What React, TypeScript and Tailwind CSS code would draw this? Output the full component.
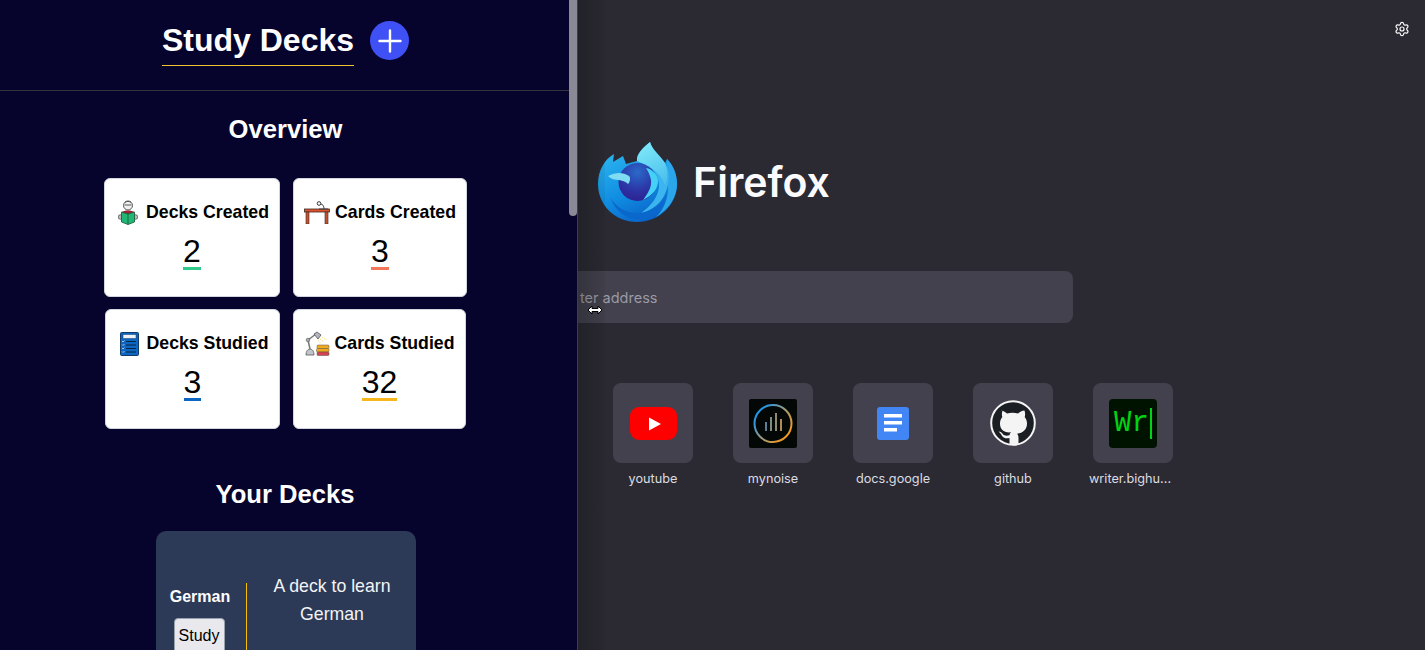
import React from 'react';
import { Settings } from 'lucide-react';

const ReaderIcon = () => (
  <svg width="20" height="25" viewBox="0 0 20 25" className="shrink-0">
    <circle cx="10" cy="5.500" r="4.500" fill="#f1f1f1" stroke="#555" strokeWidth="1" />
    <path d="M6.500 5h7M7 2.500c2-1.500 4-1.500 6 0" fill="none" stroke="#555" strokeWidth="1" />
    <path d="M4 12c2-2 10-2 12 0v3H4z" fill="#a32035" />
    <circle cx="2.500" cy="17" r="2.300" fill="#bbb" stroke="#555" strokeWidth="0.800" />
    <circle cx="17.500" cy="17" r="2.300" fill="#bbb" stroke="#555" strokeWidth="0.800" />
    <path d="M3.500 12 10 14l6.500-2v10L10 24.500 3.500 22z" fill="#22b573" stroke="#14583a" strokeWidth="0.800" />
    <path d="M10 14v10.500" stroke="#14583a" strokeWidth="0.800" />
  </svg>
);

const TableIcon = () => (
  <svg width="26" height="23" viewBox="0 0 26 23" className="shrink-0">
    <rect x="0.500" y="8" width="25" height="3" fill="#e0532a" stroke="#3a2a28" strokeWidth="0.800" />
    <rect x="2" y="11" width="3" height="12" fill="#c9502c" stroke="#3a2a28" strokeWidth="0.600" />
    <rect x="21" y="11" width="3" height="12" fill="#c9502c" stroke="#3a2a28" strokeWidth="0.600" />
    <path d="M15 8h9M20 8c0-3-1-5-4-5" fill="none" stroke="#444" strokeWidth="1" />
    <circle cx="15" cy="2.500" r="1.800" fill="#fff" stroke="#333" strokeWidth="1" />
  </svg>
);

const ChecklistIcon = () => (
  <svg width="19" height="24" viewBox="0 0 19 24" className="shrink-0">
    <rect x="0.500" y="0.500" width="18" height="23" rx="1" fill="#0d66c2" stroke="#123a66" />
    <rect x="3" y="2.500" width="13" height="4" fill="#eef2f6" stroke="#123a66" strokeWidth="0.500" />
    <path d="M6 9.500h10M6 13h10M6 16.500h10M6 20h10" stroke="#0a2540" strokeWidth="1" />
    <path d="M2 9l1 1 1.500-1.500M2 12.500l1 1 1.500-1.500M2 16l1 1 1.500-1.500M2 19.500l1 1 1.500-1.500" fill="none" stroke="#dbe8f5" strokeWidth="0.700" />
  </svg>
);

const LampIcon = () => (
  <svg width="25" height="25" viewBox="0 0 25 25" className="shrink-0">
    <path d="M1 24c0-4 2-6 4-6s4 2 4 6z" fill="#c2c4cc" stroke="#555" strokeWidth="0.800" />
    <path d="M5 18 3 9l8-6" fill="none" stroke="#777" strokeWidth="1.500" />
    <circle cx="3" cy="9" r="1.800" fill="#aaa" stroke="#555" strokeWidth="0.600" />
    <path d="m9 3 3-2 4 3-3 4z" fill="#b5b7bf" stroke="#555" strokeWidth="0.800" />
    <path d="m15 8 4 3M13 9l3 4M17 6l5 3" stroke="#f8dc7a" strokeWidth="1" strokeDasharray="1.500 1" />
    <rect x="12" y="14" width="12" height="3.500" rx="1" fill="#f2a91c" stroke="#555" strokeWidth="0.500" />
    <rect x="11.500" y="17.500" width="12.500" height="3.500" rx="1" fill="#f2a91c" stroke="#555" strokeWidth="0.500" />
    <rect x="12" y="21" width="12" height="3.500" rx="1" fill="#d4434c" stroke="#555" strokeWidth="0.500" />
  </svg>
);

const FirefoxLogo = () => (
  <svg width="80" height="81" viewBox="0 0 80 81" className="shrink-0">
    <defs>
      <linearGradient id="fxBase" x1="0.150" y1="0.100" x2="0.600" y2="1">
        <stop offset="0" stopColor="#2cb6f0" />
        <stop offset="0.600" stopColor="#0f8be0" />
        <stop offset="1" stopColor="#0a62c8" />
      </linearGradient>
      <linearGradient id="fxFlame" x1="0.300" y1="0" x2="0.700" y2="1">
        <stop offset="0" stopColor="#7fe8f8" />
        <stop offset="1" stopColor="#4cc0ee" />
      </linearGradient>
      <radialGradient id="fxGlobe" cx="0.500" cy="0.250" r="0.800">
        <stop offset="0" stopColor="#2a6ac8" />
        <stop offset="0.600" stopColor="#2c34a6" />
        <stop offset="1" stopColor="#2d1f8f" />
      </radialGradient>
    </defs>
    <path d="M39 81C17 81 0 64 0 43 0 29 7 18 16 13l-1 8 10-6 3 8 11-3C38 13 46 6 52 1c2 8 10 13 15 21l2-4c6 6 10 15 10 25 0 21-18 38-40 38z" fill="url(#fxBase)" />
    <path d="M69 18c6 6 10 15 10 25 0 14-9 26-21 33 8-8 12-18 12-30 0-10-2-19-1-28z" fill="#2ba6ea" />
    <path d="M67 22c5 9 5 20 0 31-4 9-12 16-24 19 10-7 17-16 18-26 1-9-5-20-22-30z" fill="#3cb4ee" />
    <path d="M39 20C38 13 46 6 52 1c2 8 10 13 15 21 3 7 3 15 0 22-3-9-10-17-28-24z" fill="url(#fxFlame)" />
    <path d="M12 56c7 12 17 16 28 16 10 0 20-5 27-14-5 13-16 20-28 20-12 0-22-9-27-22z" fill="#0a68cc" />
    <ellipse cx="39.500" cy="41" rx="19" ry="19" fill="url(#fxGlobe)" />
    <path d="M10 35c8-4 15-4 21 0 2 2 1 6-1 8-3-3-5-3-9-4-4 0-8-1-11-4z" fill="#7fdcf2" />
    <path d="M48 27c6 1 12 7 12 13 0 8-6 15-15 19 5-7 9-13 8-20-1-5-3-9-5-12z" fill="#45d0f5" />
  </svg>
);

const YoutubeIcon = () => (
  <svg width="47" height="33" viewBox="0 0 47 33">
    <rect width="47" height="33" rx="9" fill="#ff0000" />
    <path d="M19 10.500 31 17 19 23.500z" fill="#fff" />
  </svg>
);

const MynoiseIcon = () => (
  <svg width="48" height="49" viewBox="0 0 48 49">
    <defs>
      <linearGradient id="ringGrad" x1="0" y1="0.100" x2="1" y2="0.900">
        <stop offset="0.100" stopColor="#1c96ee" />
        <stop offset="0.500" stopColor="#9a9a80" />
        <stop offset="0.900" stopColor="#f59a1c" />
      </linearGradient>
    </defs>
    <rect width="48" height="49" rx="2" fill="#030806" />
    <circle cx="24" cy="24.500" r="18.500" fill="none" stroke="url(#ringGrad)" strokeWidth="2" />
    <rect x="16" y="23" width="2" height="9" fill="#5c7f95" />
    <rect x="21" y="18" width="2" height="14" fill="#7f8a80" />
    <rect x="26" y="14" width="2" height="18" fill="#8f8a70" />
    <rect x="31" y="20" width="2" height="12" fill="#b08a50" />
  </svg>
);

const DocsIcon = () => (
  <svg width="32" height="33" viewBox="0 0 32 33">
    <rect width="32" height="33" rx="3" fill="#4285f4" />
    <rect x="7" y="7" width="18" height="3.500" fill="#fff" />
    <rect x="7" y="14" width="18" height="3.500" fill="#fff" />
    <rect x="7" y="21" width="13" height="3.500" fill="#fff" />
  </svg>
);

const GithubIcon = () => (
  <svg width="46" height="46" viewBox="0 0 46 46">
    <circle cx="23" cy="23" r="21.800" fill="#1b1f23" stroke="#f4f4f4" strokeWidth="2" />
    <path d="M11 10.500c2.500 0 5 1.500 6.500 3 3.500-1 7.500-1 11 0 1.500-1.500 4-3 6.500-3 .8 2.500.8 5 .2 6.500 1.500 1.800 2.300 4 2.300 6.500 0 6-4 9.500-10 10.300 1 1 1.500 2.500 1.500 4.200V44.800c-2.600.6-6.400.6-9 0V38c-3 .8-6.500.5-8-3-.7-1.500-2-2.800-3-3.500 2 0 3.500 1.200 4.500 2.800 1.200 1.600 3.700 1.800 6.500 1 .1-1.200.6-2.200 1.500-3C14.500 33 10.500 29.500 10.500 23.500c0-2.500.8-4.700 2.300-6.500-.6-1.500-.6-4 .2-6.500z" fill="#f4f4f4" transform="translate(-.500 0)" />
  </svg>
);

const ResizeCursor = () => (
  <svg width="16" height="10" viewBox="0 0 16 10">
    <path d="M1 5 5 1v2.500h6V1l4 4-4 4V6.500H5V9z" fill="#fff" stroke="#000" strokeWidth="1" />
  </svg>
);

const StatCard = ({ icon, title, value, barColor, width, height, gap }: { icon: React.ReactNode; title: string; value: number; barColor: string; width: string; height: string; gap: string }) => (
  <div className={`flex flex-col items-center rounded-md border border-gray-300 bg-white text-black ${width} ${height}`}>
    <div className={`flex h-[25px] items-center mt-[21px] ${gap}`}>
      {icon}
      <span className="text-[17.7px] font-bold leading-none whitespace-nowrap">{title}</span>
    </div>
    <div className={`mt-[11px] border-b-[3px] text-[32px] leading-[31px] ${barColor}`}>{value}</div>
  </div>
);

const Tile = ({ label, labelClass, children }: { label: string; labelClass?: string; children: React.ReactNode }) => (
  <div className="flex w-[120px] flex-col items-center">
    <div className="flex size-[80px] items-center justify-center rounded-lg bg-[#42414d]">{children}</div>
    <span className={`mt-[8px] text-center text-[12.7px] leading-[16px] whitespace-nowrap text-[#dcdce0] ${labelClass ?? ''}`}>{label}</span>
  </div>
);

export default function App() {
  return (
    <div className="relative h-[650px] w-full overflow-hidden bg-[#2b2a33] font-['Inter',sans-serif]">
      {/* new tab page behind the sidebar */}
      <div className="flex flex-col">
        <div className="flex justify-end pt-[21px] pr-[15px]">
          <Settings size={16} color="#fbfbfe" strokeWidth={1.8} />
        </div>
        <div className="mt-[104px] flex items-center justify-center gap-[15px] pl-[3px]">
          <FirefoxLogo />
          <span className="pt-[2px] text-[41px] font-semibold leading-none text-[#fbfbfe]">Firefox</span>
        </div>
        <div className="mt-[49px] ml-[352px] flex h-[52px] w-[721px] items-center rounded-lg bg-[#42414d] pt-[1px] pl-[228px] text-[14.5px] text-[#9b9aa6]">
          ter address
        </div>
        <div className="mt-[60px] ml-[593px] flex">
          <Tile label="youtube"><YoutubeIcon /></Tile>
          <Tile label="mynoise"><MynoiseIcon /></Tile>
          <Tile label="docs.google"><DocsIcon /></Tile>
          <Tile label="github"><GithubIcon /></Tile>
          <Tile label="writer.bighu..." labelClass="pr-[6px]">
            <div className="flex h-[49px] w-[48px] items-center justify-center rounded-sm bg-[#001200] font-['Liberation_Mono',monospace] text-[29px] leading-none text-[#00d414]">
              Wr<span className="ml-[1px] h-[31px] w-[2px] bg-[#00d414]"></span>
            </div>
          </Tile>
        </div>
      </div>

      {/* soft shadow next to the sidebar */}
      <div className="absolute top-0 bottom-0 left-[578px] w-[27px] bg-gradient-to-r from-black/20 to-black/5"></div>

      <div className="absolute top-[305px] left-[587px]">
        <ResizeCursor />
      </div>

      {/* sidebar */}
      <div className="absolute top-0 left-0 h-[650px] w-[578px] overflow-hidden border-r border-[#3f3f46] bg-[#06032c] font-['Liberation_Sans',sans-serif] text-white">
        <div className="flex h-[91px] items-start justify-center gap-[16px] border-b border-[#33333d] pt-[21px] pr-[6px]">
          <h1 className="h-[45px] border-b border-[#f2c230] pt-[1px] text-[32px] font-bold leading-[37px]">Study Decks</h1>
          <button className="flex h-[39px] w-[39px] items-center justify-center rounded-full bg-[#3f51f5]">
            <svg width="24" height="24" viewBox="0 0 24 24">
              <path d="M12 1.500v21M1.500 12h21" stroke="#fff" strokeWidth="2.400" strokeLinecap="round" />
            </svg>
          </button>
        </div>

        <h2 className="mt-[24px] pr-[6px] text-center text-[25.6px] font-bold leading-[28px]">Overview</h2>

        <div className="mt-[35px] flex flex-col gap-[12px] pr-[6px]">
          <div className="flex justify-center gap-[13px]">
            <StatCard icon={<ReaderIcon />} title="Decks Created" value={2} barColor="border-[#2fc98a]" width="w-[176px]" height="h-[119px]" gap="gap-[8px] pl-[3px]" />
            <StatCard icon={<TableIcon />} title="Cards Created" value={3} barColor="border-[#f4775a]" width="w-[174px]" height="h-[119px]" gap="gap-[5px]" />
          </div>
          <div className="flex justify-center gap-[13px]">
            <StatCard icon={<ChecklistIcon />} title="Decks Studied" value={3} barColor="border-[#0d66c2]" width="w-[175px]" height="h-[120px]" gap="gap-[8px] pl-[3px]" />
            <StatCard icon={<LampIcon />} title="Cards Studied" value={32} barColor="border-[#f6b61c]" width="w-[173px]" height="h-[120px]" gap="gap-[5px]" />
          </div>
        </div>

        <h2 className="mt-[51px] pr-[7px] text-center text-[25.6px] font-bold leading-[28px]">Your Decks</h2>

        <div className="mt-[23px] ml-[156px] flex h-[200px] w-[260px] rounded-[10px] bg-[#2d3a57]">
          <div className="mt-[52px] flex w-[91px] flex-col items-center border-r border-[#f6c200] pt-[4px] pr-[2px]">
            <span className="text-[16px] font-bold leading-[20px]">German</span>
            <button className="mt-[11px] -ml-[2px] h-[36px] w-[51px] rounded border border-gray-400 bg-[#e9e9ed] text-[16px] text-black">Study</button>
          </div>
          <div className="flex-1 pt-[41px] pl-[1px] text-center text-[17.7px] leading-[28px] text-[#f4f4f6]">
            A deck to learn
            <br />
            German
          </div>
        </div>

        {/* scrollbar thumb */}
        <div className="absolute top-0 right-0 h-[216px] w-[8px] rounded-b bg-[#8a8a96]"></div>
      </div>
    </div>
  );
}
